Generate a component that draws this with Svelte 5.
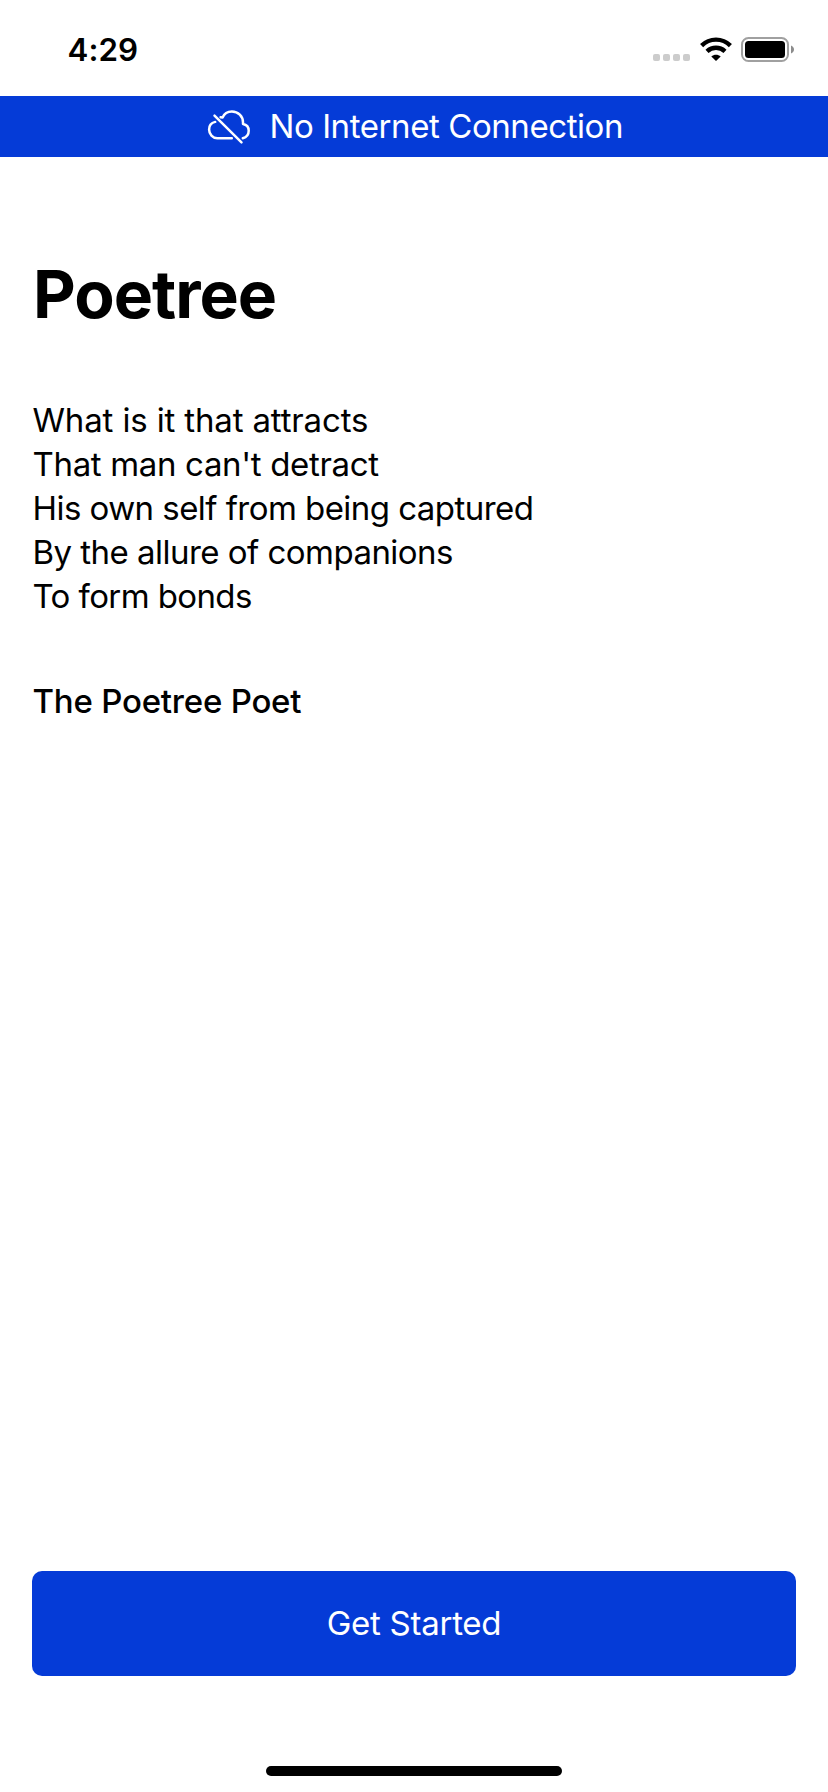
<script>
  // Each line carries its own tracking, in pixels.
  const lines = [
    { text: 'What is it that attracts', tracking: -0.15 },
    { text: "That man can't detract", tracking: -0.34 },
    { text: 'His own self from being captured', tracking: -0.55 },
    { text: 'By the allure of companions', tracking: -0.53 },
    { text: 'To form bonds', tracking: -0.6 }
  ];
</script>

<div class="screen">
  <header class="status">
    <span class="time">4:29</span>
    <div class="indicators">
      <div class="cell"><i></i><i></i><i></i><i></i></div>
      <svg class="wifi" width="32" height="24" viewBox="0 0 32 24">
        <g fill="none" stroke="#000" stroke-width="4.4">
          <path d="M1.6 8.6C9.7 .6 22.3 .6 30.4 8.6" />
          <path d="M7 14.3c5.1-4.8 12.9-4.8 18 0" />
        </g>
        <path d="M16 24l-4.7-4.6c2.7-2.3 6.7-2.3 9.4 0z" />
      </svg>
      <svg class="battery" width="54" height="26" viewBox="0 0 54 26">
        <rect x="1" y="1" width="46" height="23" rx="6.5" fill="none" stroke="#a0a0a0" stroke-width="2" />
        <rect x="4" y="4" width="40" height="17" rx="3.5" />
        <path d="M50 8.5c4 1.5 4 6.5 0 8z" fill="#8c8c8c" />
      </svg>
    </div>
  </header>

  <div class="banner">
    <svg width="44" height="36" viewBox="0 0 44 36" fill="none" stroke="#fff" stroke-width="2.5" stroke-linecap="round" stroke-linejoin="round">
      <path d="M8.2 12.9C4.5 13.7 2.1 16.7 2.1 20.5C2.1 25.2 5.7 29.2 10.3 29.2H24.8" />
      <path d="M13.6 8.2L15.6 8.4C17 5 20.7 2.4 24.9 2.4C31.2 2.4 36 7.2 36 13.4V15C39.4 15.6 41.7 18.2 41.7 21.7C41.7 25.2 39.3 28.3 35.8 29.2" />
      <path d="M7.5 6.7L34.5 33.3" />
    </svg>
    <span>No Internet Connection</span>
  </div>

  <main>
    <h1>Poetree</h1>
    <div class="poem">
      {#each lines as line}
        <p style:letter-spacing="{line.tracking}px">{line.text}</p>
      {/each}
    </div>
    <p class="author">The Poetree Poet</p>
    <button>Get Started</button>
  </main>
  <div class="home"></div>
</div>

<style>
  :global(body) { background: #fff; }
  .screen {
    width: 828px;
    height: 1792px;
    display: flex;
    flex-direction: column;
    background: #fff;
    color: #000;
    font-family: Inter, sans-serif;
    font-size: 33px;
    line-height: 44px;
    overflow: hidden;
  }
  .status {
    height: 96px;
    box-sizing: border-box;
    padding: 28px 33px 0 67.5px;
    display: flex;
    justify-content: space-between;
    align-items: flex-start;
    flex: none;
  }
  .time { font-size: 31.3px; font-weight: 600; letter-spacing: 0.1px; }
  .indicators { display: flex; align-items: flex-start; padding-top: 9px; }
  .cell { display: flex; gap: 3px; padding-top: 17px; margin-right: 10px; }
  .cell i { width: 7px; height: 7px; border-radius: 2px; background: #ccc; }
  .wifi { margin-right: 9px; }
  .banner {
    height: 61px;
    box-sizing: border-box;
    padding-left: 207px;
    flex: none;
    display: flex;
    align-items: center;
    gap: 18.5px;
    background: #053bd7;
    color: #fff;
    letter-spacing: -0.42px;
  }
  .banner span { padding-bottom: 2px; }
  main {
    flex: 1;
    display: flex;
    flex-direction: column;
    padding: 97px 32px 0;
  }
  h1 { margin: 0 0 0 1px; font-size: 66px; font-weight: 700; line-height: 80px; letter-spacing: -1px; }
  .poem { margin: 64px 0 0 0.5px; }
  p { margin: 0; white-space: nowrap; }
  .author { margin: 61px 0 0 0.5px; font-weight: 500; letter-spacing: -0.22px; }
  button {
    margin-top: auto;
    height: 105px;
    padding: 0 0 2px;
    border: 0;
    border-radius: 10px;
    background: #053bd7;
    color: #fff;
    font: inherit;
    letter-spacing: -0.27px;
  }
  .home {
    width: 296px;
    height: 10px;
    margin: 90px auto 16px;
    border-radius: 5px;
    background: #000;
    flex: none;
  }
</style>
